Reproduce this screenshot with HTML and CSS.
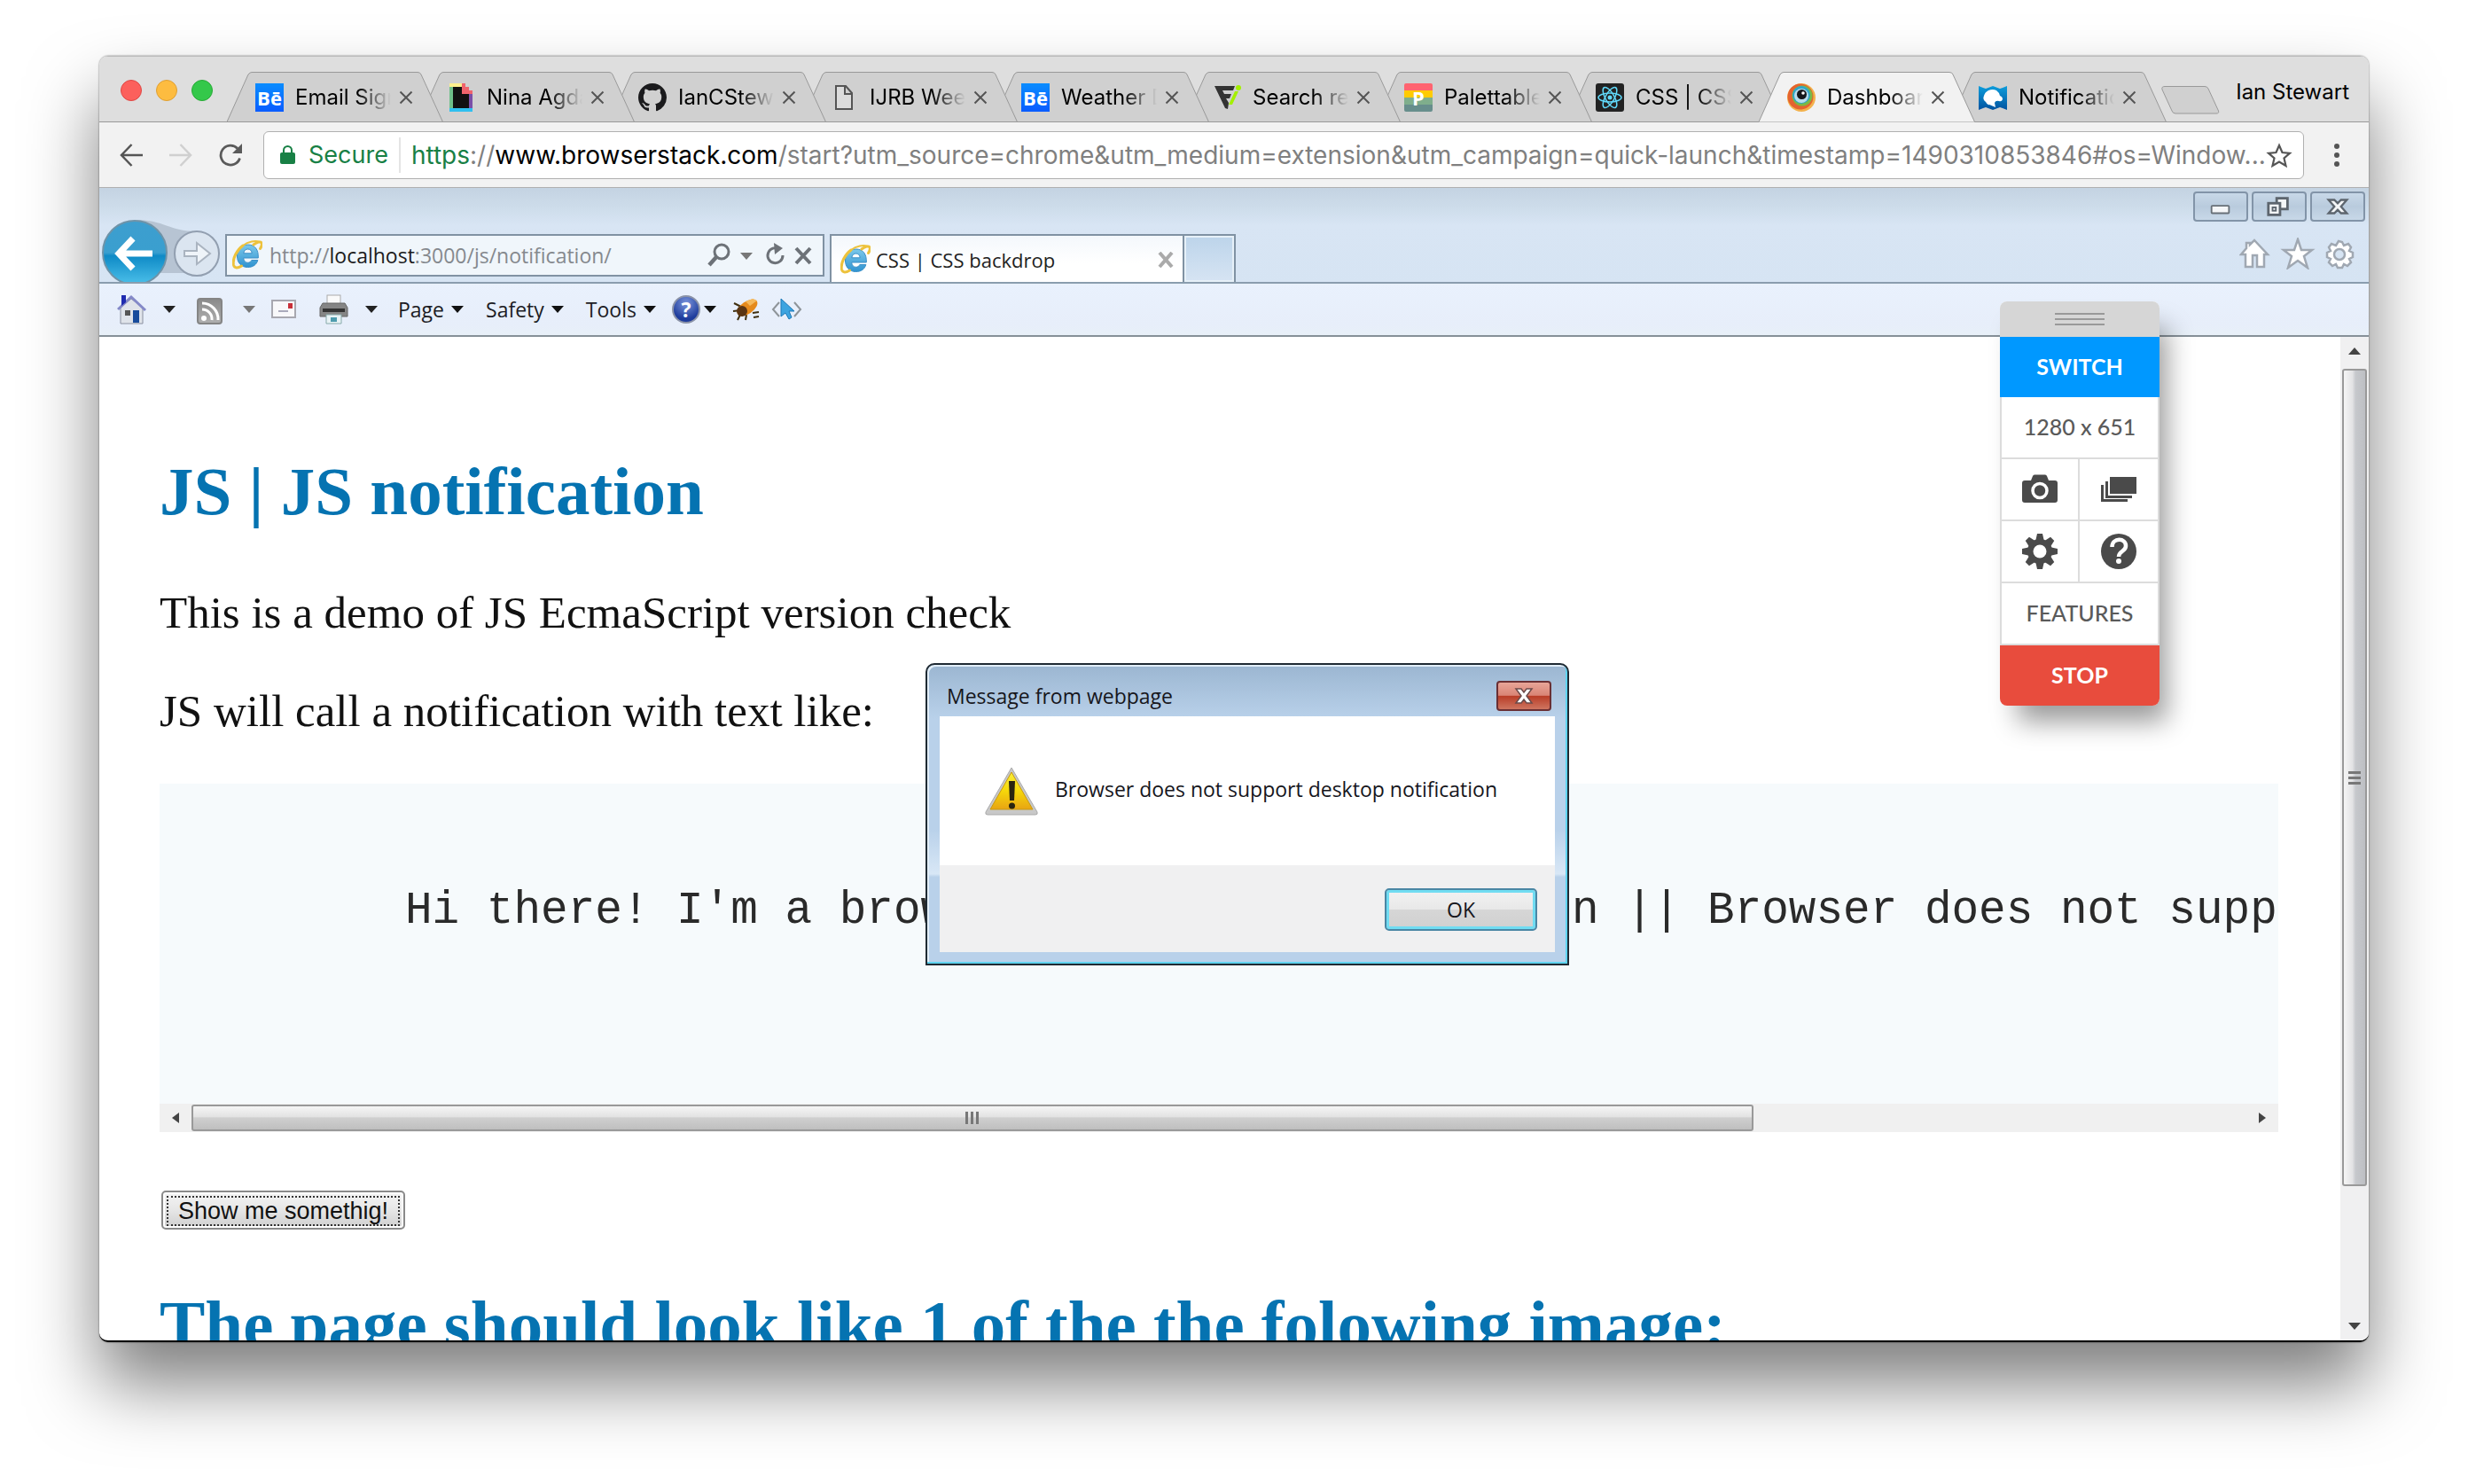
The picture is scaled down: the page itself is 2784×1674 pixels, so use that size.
FILE: index.html
```html
<!DOCTYPE html>
<html lang="en">
<head>
<meta charset="utf-8">
<title>Dashboard</title>
<link rel="stylesheet" href="styles.css">
</head>
<body>
<svg class="defs" aria-hidden="true">
  <defs>
    <linearGradient id="ieBlue" x1="0" y1="0" x2="0" y2="1"><stop offset="0" stop-color="#7cc8ea"/><stop offset="1" stop-color="#2f93d0"/></linearGradient>
    <linearGradient id="backBlue" x1="0" y1="0" x2="0" y2="1"><stop offset="0" stop-color="#3d9ecf"/><stop offset=".5" stop-color="#3a9fcf"/><stop offset=".55" stop-color="#0e8ac6"/><stop offset="1" stop-color="#4cc0ea"/></linearGradient>
    <linearGradient id="warn" x1="0" y1="0" x2="0" y2="1"><stop offset="0" stop-color="#f8ee3a"/><stop offset=".5" stop-color="#f6d80a"/><stop offset="1" stop-color="#e8a413"/></linearGradient>
    <linearGradient id="grey" x1="0" y1="0" x2="0" y2="1"><stop offset="0" stop-color="#8a8a8a"/><stop offset="1" stop-color="#b0b0b0"/></linearGradient>
    <symbol id="tab" viewBox="0 0 244 57"><path d="M0 56.500 L24 3 Q26 .5 28 .5 H215 Q218 .5 219 3 L243.500 56.500" stroke="#999"/></symbol>
    <symbol id="x" viewBox="0 0 16 16"><path d="M1.500 1.500 14.500 14.500M14.500 1.500 1.500 14.500" stroke="#555" stroke-width="2" fill="none"/></symbol>
    <symbol id="ie" viewBox="0 0 34 34">
      <path d="M17.500 5C9.500 5 5.500 11 5.500 18s4.500 12.500 12 12.500c6 0 10-3 11.300-8h-7c-.8 1.800-2.200 2.800-4.200 2.800-3 0-4.800-2.200-4.900-5.300h16.600C29.800 10.500 25.500 5 17.500 5zm0 5c2.700 0 4.500 1.800 4.700 4.800H12.800c.4-3 2.200-4.800 4.700-4.800z" fill="url(#ieBlue)" stroke="#3a8fc8"/>
      <path d="M24 5c4-3 8-4 9-2 .8 1.500 0 4-1.500 6.500M12 6C5 11 0 21 1.500 28c1 4 5 3.500 9 1" fill="none" stroke="#edc23c" stroke-width="3" stroke-linecap="round"/>
      <path d="M12 6C18 1.500 26 0 31 2" fill="none" stroke="#edc23c" stroke-width="2"/>
    </symbol>
    <symbol id="caret" viewBox="0 0 14 8"><path d="M0 0h14L7 8z"/></symbol>
  </defs>
</svg>

<div class="window">
  <header class="strip">
    <div class="lights">
      <button class="light red" aria-label="Close window"></button>
      <button class="light amber" aria-label="Minimise window"></button>
      <button class="light green" aria-label="Zoom window"></button>
    </div>
    <nav class="tabs" aria-label="Open tabs">
      <div class="tab t1"><svg class="tab-shape"><use href="#tab"/></svg><span class="fav behance">Bē</span><a class="tab-title" href="#">Email Signature</a><button class="tab-close" aria-label="Close tab"><svg><use href="#x"/></svg></button></div>
      <div class="tab t2"><svg class="tab-shape"><use href="#tab"/></svg><svg class="fav" viewBox="0 0 32 32"><path d="M3 4h12v24H3z" fill="#6fc08a"/><path d="M3 0h14v4H3z" fill="#fdf08e"/><path d="M25 12h4v16h-4z" fill="#7a4fa8"/><path d="M3 28h26v4H3z" fill="#2fc0f0"/><path d="M7 4h10v8h8v16H7z" fill="#111"/><path d="M17 0h4v4h4v4h4v4H17z" fill="#f0646c"/></svg><a class="tab-title" href="#">Nina Agdal GIFs</a><button class="tab-close" aria-label="Close tab"><svg><use href="#x"/></svg></button></div>
      <div class="tab t3"><svg class="tab-shape"><use href="#tab"/></svg><svg class="fav" viewBox="0 0 16 16"><path fill="#1b1b1d" d="M8 0C3.580 0 0 3.580 0 8c0 3.540 2.290 6.530 5.470 7.590.4.070.55-.17.55-.38 0-.19-.01-.82-.01-1.490-2.010.37-2.530-.49-2.690-.94-.09-.23-.48-.94-.82-1.130-.28-.15-.68-.52-.01-.53.63-.01 1.080.58 1.230.82.72 1.210 1.870.87 2.330.66.07-.52.28-.87.51-1.070-1.780-.2-3.640-.89-3.640-3.950 0-.87.31-1.590.82-2.150-.08-.2-.36-1.020.08-2.120 0 0 .67-.21 2.200.82.64-.18 1.320-.27 2-.27s1.360.09 2 .27c1.530-1.040 2.200-.82 2.200-.82.44 1.100.16 1.920.08 2.120.51.56.82 1.270.82 2.150 0 3.070-1.870 3.750-3.650 3.950.29.25.54.73.54 1.480 0 1.070-.01 1.930-.01 2.200 0 .21.15.46.55.38A8.010 8.010 0 0 0 16 8c0-4.420-3.580-8-8-8z"/></svg><a class="tab-title" href="#">IanCStewart</a><button class="tab-close" aria-label="Close tab"><svg><use href="#x"/></svg></button></div>
      <div class="tab t4"><svg class="tab-shape"><use href="#tab"/></svg><svg class="fav" viewBox="0 0 32 32"><path d="M7 3h11l7 8v18H7zM17 3v9h8" fill="#dcdcdc" stroke="#555" stroke-width="2"/></svg><a class="tab-title" href="#">IJRB Week 7</a><button class="tab-close" aria-label="Close tab"><svg><use href="#x"/></svg></button></div>
      <div class="tab t5"><svg class="tab-shape"><use href="#tab"/></svg><span class="fav behance">Bē</span><a class="tab-title" href="#">Weather Dash</a><button class="tab-close" aria-label="Close tab"><svg><use href="#x"/></svg></button></div>
      <div class="tab t6"><svg class="tab-shape"><use href="#tab"/></svg><svg class="fav" viewBox="0 0 32 32"><path d="M2 3h23l-2 5H11l2 4h8l-2 5h-4l3 5-1 7-3-1z" fill="#333"/><circle cx="29" cy="5" r="3" fill="#a4f000"/><path d="M25 9h4l-7 15h-4z" fill="#a4f000"/></svg><a class="tab-title" href="#">Search results</a><button class="tab-close" aria-label="Close tab"><svg><use href="#x"/></svg></button></div>
      <div class="tab t7"><svg class="tab-shape"><use href="#tab"/></svg><span class="fav palettable">P</span><a class="tab-title" href="#">Palettable</a><button class="tab-close" aria-label="Close tab"><svg><use href="#x"/></svg></button></div>
      <div class="tab t8"><svg class="tab-shape"><use href="#tab"/></svg><svg class="fav" viewBox="0 0 32 32"><rect width="32" height="32" rx="3" fill="#222"/><g fill="none" stroke="#61dafb" stroke-width="1.500"><ellipse cx="16" cy="16" rx="13" ry="5"/><ellipse cx="16" cy="16" rx="13" ry="5" transform="rotate(60 16 16)"/><ellipse cx="16" cy="16" rx="13" ry="5" transform="rotate(120 16 16)"/></g><circle cx="16" cy="16" r="2.500" fill="#61dafb"/></svg><a class="tab-title" href="#">CSS | CSS backdrop</a><button class="tab-close" aria-label="Close tab"><svg><use href="#x"/></svg></button></div>
      <div class="tab active"><svg class="tab-shape"><use href="#tab"/></svg><svg class="fav" viewBox="0 0 32 32"><circle cx="16" cy="16" r="16" fill="#f3b24c"/><circle cx="15" cy="15" r="14.500" fill="#e5632f"/><circle cx="17" cy="14" r="11.500" fill="#7cb944"/><circle cx="16" cy="13" r="10" fill="#2fa5c8"/><circle cx="16" cy="14" r="8" fill="#b8dcec"/><circle cx="16.500" cy="12.500" r="5.500" fill="#16181c"/><circle cx="18" cy="11" r="1.800" fill="#fff"/></svg><a class="tab-title" href="#">Dashboard</a><button class="tab-close" aria-label="Close tab"><svg><use href="#x"/></svg></button></div>
      <div class="tab"><svg class="tab-shape"><use href="#tab"/></svg><svg class="fav" viewBox="0 0 32 32"><defs><linearGradient id="mdn" x1="0" y1="0" x2="0" y2="1"><stop offset="0" stop-color="#0d9ddb"/><stop offset="1" stop-color="#0053a0"/></linearGradient></defs><path d="M0 3l5 2 3 1 8-3 8 3 3-1 5-2v27l-5-2-3-1-8 3-8-3-3 1-5 2z" fill="url(#mdn)"/><path d="M11 8q5-2 9 0 3 2 4 6 3 1 3 4-1 3-4 2-4-1-5 2l1 5-7-3q-2 1-4-3-4-3-2-7 1-4 5-6z" fill="#fff"/></svg><a class="tab-title" href="#">Notification API</a><button class="tab-close" aria-label="Close tab"><svg><use href="#x"/></svg></button></div>
    </nav>
    <button class="new-tab" aria-label="New tab"><svg viewBox="0 0 66 32"><path d="M4 .5H49Q52 .5 53 3L64.500 28Q65.500 31 62 31H16Q13 31 12 28L1 4Q0 .5 4 .5z" fill="#d0d0d0" stroke="#999"/></svg></button>
    <span class="profile">Ian Stewart</span>
  </header>

  <div class="toolbar">
    <button class="nav-btn" aria-label="Back"><svg viewBox="0 0 26 26"><path d="M26 13H2M13.500 1 2 13l11.500 12" fill="none" stroke="#555" stroke-width="2.500"/></svg></button>
    <button class="nav-btn" aria-label="Forward"><svg viewBox="0 0 26 26"><path d="M0 13h24M12.500 1 24 13 12.500 25" fill="none" stroke="#d0d0d0" stroke-width="2.500"/></svg></button>
    <button class="nav-btn" aria-label="Reload"><svg viewBox="0 0 26 26"><path d="M23.500 16.500A11 11 0 1 1 21 5.500" fill="none" stroke="#5a5a5a" stroke-width="2.800"/><path d="M26 0v11H15z" fill="#5a5a5a"/></svg></button>
    <div class="omnibox">
      <svg class="lock" viewBox="0 0 17 22"><path d="M4 9V5.500a4.500 4.500 0 0 1 9 0V9" fill="none" stroke="#188045" stroke-width="2"/><rect y="8" width="17" height="13" rx="2" fill="#188045"/></svg>
      <span class="secure">Secure</span>
      <div class="url" role="textbox" aria-label="Address" contenteditable="true" spellcheck="false"><span class="ok">https</span>://<b>www.browserstack.com</b>/start?utm_source=chrome&amp;utm_medium=extension&amp;utm_campaign=quick-launch&amp;timestamp=1490310853846#os=Window...</div>
      <button class="star" aria-label="Bookmark"><svg viewBox="0 0 30 28"><path d="M15 3l3.500 8 8.500.8-6.500 5.700 2 8.500L15 21.500 7.500 26l2-8.500L3 11.800l8.500-.8z" fill="none" stroke="#555" stroke-width="2.200"/></svg></button>
    </div>
    <button class="menu" aria-label="Menu"><svg viewBox="0 0 6 26"><g fill="#555"><circle cx="3" cy="3" r="3"/><circle cx="3" cy="13" r="3"/><circle cx="3" cy="23" r="3"/></g></svg></button>
  </div>

  <div class="remote">
    <div class="ie-top">
      <svg class="ie-nav" viewBox="0 0 138 70">
        <path d="M40 0C75 1 75 13 110 13L120 60H60z" fill="#a9b6c4" opacity=".7"/>
        <circle cx="38" cy="37" r="36" fill="url(#backBlue)" stroke="#6f93a8" stroke-width="2"/>
        <path d="M58 38H24M36 21 20 38l16 17" fill="none" stroke="#fff" stroke-width="7"/>
        <circle cx="108" cy="38" r="25" fill="#dbe5f0" stroke="#929fb0" stroke-width="2"/>
        <path d="M94 35h14v-9l15 12-15 12v-9H94z" fill="#eff4f9" stroke="#aab4c0" stroke-width="2"/>
      </svg>
      <div class="ie-address">
        <svg class="ie-icon"><use href="#ie"/></svg>
        <div class="ie-url" role="textbox" aria-label="Page address" contenteditable="true" spellcheck="false">http://<b>localhost</b>:3000/js/notification/</div>
        <svg class="ie-tools" viewBox="0 0 120 28"><g fill="none" stroke="#6d7278" stroke-width="3"><circle cx="16" cy="10" r="8"/><path d="M10 16 2 25" stroke-width="4.500"/><path d="M81 7a8.500 8.500 0 1 0 4 7"/><path d="M100 6l16 17M116 6l-16 17" stroke-width="4"/></g><path d="M75 0l10 6-9 7z" fill="#6d7278"/><path d="M37 11h14l-7 8z" fill="#777"/></svg>
      </div>
      <div class="ie-tab">
        <svg class="ie-icon"><use href="#ie"/></svg>
        <span class="ie-tab-title">CSS | CSS backdrop</span>
        <svg class="ie-tab-close" viewBox="0 0 18 18"><path d="M2 1l14 16M16 1 2 17" stroke="#aaa" stroke-width="4"/></svg>
      </div>
      <button class="ie-new" aria-label="New Tab"></button>
      <div class="ie-right">
        <div class="win-btns">
          <button aria-label="Minimise"><svg viewBox="0 0 60 32"><rect x="19" y="15" width="21" height="9" rx="1" fill="#f4f6f8" stroke="#687078" stroke-width="2"/></svg></button>
          <button aria-label="Restore"><svg viewBox="0 0 60 32"><g fill="#f4f6f8" stroke="#5d656e" stroke-width="3"><rect x="27" y="6" width="13" height="13"/><rect x="17" y="12" width="14" height="14"/><rect x="22" y="17" width="4" height="4" stroke-width="2"/></g></svg></button>
          <button aria-label="Close"><svg viewBox="0 0 60 32"><path d="M19 8h7l4 4 4-4h7l-7 8 7 8h-7l-4-4-4 4h-7l7-8z" fill="#f4f6f8" stroke="#5d656e" stroke-width="2.500"/></svg></button>
        </div>
        <svg class="ie-links" viewBox="0 0 132 36"><g fill="#fff" stroke="#a0a8b2" stroke-width="2.500"><path d="M2 19 8 12V6h4v2l5-5 15 16h-4v14h-8V20h-5v13H7V19z"/><path d="M66 2l4 12h12l-9 7 4 13-11-8-11 8 4-13-9-7h12z"/><path d="M112 4l4 1 2 4 5-2 3 4-2 4 4 2v5l-4 2 2 4-4 4-4-2-2 4h-5l-2-4-4 2-4-4 2-4-4-2v-5l4-2-2-4 3-4 5 2z"/><circle cx="113" cy="19" r="6" fill="#d6e4f3"/></g></svg>
      </div>
    </div>

    <div class="ie-bar">
      <svg class="cmd-icons" viewBox="0 0 296 34">
        <path d="M4 15v18h25V15L16 5z" fill="#dfe3ea" stroke="#8a90a0"/><path d="M1 17 16 3l16 15" fill="none" stroke="#8489c8" stroke-width="3"/><path d="M5 1h5v8l-5 4z" fill="#1f2bb0"/><rect x="18" y="18" width="7" height="14" fill="#174b9c"/><rect x="9" y="18" width="6" height="6" fill="#555"/>
        <path d="M52 13h14l-7 8z" fill="#222"/>
        <rect x="91" y="5" width="27" height="28" rx="3" fill="url(#grey)" stroke="#858585" stroke-width="2"/><g fill="none" stroke="#fff" stroke-width="3"><path d="M96 17a11 11 0 0 1 11 12M96 10a18 18 0 0 1 18 19"/></g><circle cx="98" cy="27" r="3" fill="#fff"/>
        <path d="M142 13h14l-7 8z" fill="#777"/>
        <rect x="175" y="7" width="26" height="19" fill="#f8f8fa" stroke="#a8a8b0" stroke-width="2"/><path d="M182 19h11" stroke="#aab" stroke-width="2"/><path d="M193 10h5v6h-5z" fill="#c8303a"/>
        <rect x="237" y="1" width="15" height="12" fill="#fafafa" stroke="#aaa"/><path d="M229 15l3-5h25l3 5v10h-31z" fill="#858585" stroke="#666"/><path d="M232 16h25v4h-25z" fill="#333"/><path d="M236 23h17v10h-17z" fill="#e8f3f6" stroke="#8aa"/><path d="M241 26h7v5h-7z" fill="#4e9cae"/>
        <path d="M280 13h14l-7 8z" fill="#222"/>
      </svg>
      <button class="cmd">Page<svg><use href="#caret"/></svg></button>
      <button class="cmd">Safety<svg><use href="#caret"/></svg></button>
      <button class="cmd">Tools<svg><use href="#caret"/></svg></button>
      <span class="help">?</span>
      <svg class="cmd-end" viewBox="0 0 112 34">
        <path d="M0 13h14l-7 8z" fill="#111"/>
        <path d="M34 10l8 4M33 19l9-1M38 29l4-8M47 29l1-6M56 26l6-1M55 21l7-1" stroke="#403010" stroke-width="2"/><ellipse cx="49" cy="15" rx="13" ry="7" transform="rotate(-35 49 15)" fill="#e58a1c"/><ellipse cx="43" cy="19" rx="6" ry="6" fill="#5a3512"/><path d="M47 8l8-3 5 2-8 6z" fill="#f5b95c"/>
        <path d="M85 9l-7 8 7 8M102 9l7 8-7 8" fill="none" stroke="#8e9499" stroke-width="2"/><path d="M87 5v20l5-4 4 7 3-2-3-7h6z" fill="#3da4e0" stroke="#1c78b8"/>
      </svg>
    </div>

    <div class="view">
      <main class="page">
        <h1>JS | JS notification</h1>
        <p>This is a demo of JS EcmaScript version check</p>
        <p>JS will call a notification with text like:</p>
        <div class="sample">
          <pre><code>Hi there! I'm a browser desktop notification || Browser does not support desktop notification</code></pre>
          <div class="hscroll">
            <svg class="arrow" viewBox="0 0 8 12"><path d="M8 0v12L0 6z" fill="#444"/></svg>
            <div class="htrack"><div class="hthumb"><i></i><i></i><i></i></div></div>
            <svg class="arrow" viewBox="0 0 8 12"><path d="M0 0v12l8-6z" fill="#444"/></svg>
          </div>
        </div>
        <button class="show"><span>Show me somethig!</span></button>
        <h1>The page should look like 1 of the the folowing image:</h1>
      </main>
      <div class="vscroll">
        <svg class="varrow" viewBox="0 0 14 8"><path d="M0 8h14L7 0z" fill="#444"/></svg>
        <div class="vtrack"><div class="vthumb"><i></i><i></i><i></i></div></div>
        <svg class="varrow" viewBox="0 0 14 8"><path d="M0 0h14L7 8z" fill="#444"/></svg>
      </div>

      <section class="dialog" role="alertdialog" aria-labelledby="dlg-title" aria-describedby="dlg-text">
        <div class="dlg-head">
          <span id="dlg-title">Message from webpage</span>
          <button class="dlg-close" aria-label="Close"><svg viewBox="0 0 22 18"><path d="M2 1h6l3 4 3-4h6l-6 8 6 8h-6l-3-4-3 4H2l6-8z" fill="#fff" stroke="#6b4a4a" stroke-width="1.500"/></svg></button>
        </div>
        <div class="dlg-body">
          <svg class="warn" viewBox="0 0 62 56"><path d="M31 2 60 52Q61 55 58 55H4Q1 55 2 52z" fill="#c8c8c8" stroke="#aaa"/><path d="M31 7 55 49H7z" fill="url(#warn)" stroke="#c99a10"/><path d="M28 17h7l-1 22h-5z" fill="#2a2410"/><circle cx="31.500" cy="45" r="3.500" fill="#2a2410"/></svg>
          <span id="dlg-text">Browser does not support desktop notification</span>
        </div>
        <div class="dlg-foot"><button class="ok-btn">OK</button></div>
      </section>
    </div>

    <aside class="dock" aria-label="Session controls">
      <div class="grip"><i></i><i></i><i></i></div>
      <button class="switch">SWITCH</button>
      <div class="cell wide">1280 x 651</div>
      <div class="pair">
        <button class="cell" aria-label="Screenshot"><svg viewBox="0 0 40 34"><path d="M3 7h7l2-5q.5-1.500 2-1.500h12q1.500 0 2 1.500l2 5h7q3 0 3 3v19q0 3-3 3H3q-3 0-3-3V10q0-3 3-3z" fill="#4a4a4a"/><circle cx="20" cy="18.500" r="8" fill="none" stroke="#fff" stroke-width="3.500"/></svg></button>
        <button class="cell" aria-label="Gallery"><svg viewBox="0 0 40 34"><path d="M10 3h30v19H10zM5 8h3v16h27v3H5zM0 12h3v16h27v3H0z" fill="#4a4a4a"/></svg></button>
      </div>
      <div class="pair">
        <button class="cell" aria-label="Settings"><svg viewBox="0 0 40 40"><g fill="#4a4a4a"><circle cx="20" cy="20" r="14"/><g id="teeth"><path d="M17 0h6l2 9H15zM17 40h6l2-9H15z"/><path d="M0 17v6l9 2V15zM40 17v6l-9 2V15z"/></g><use href="#teeth" transform="rotate(45 20 20)"/></g><circle cx="20" cy="20" r="7.500" fill="#fff"/></svg></button>
        <button class="cell" aria-label="Help"><svg viewBox="0 0 40 40"><circle cx="20" cy="20" r="20" fill="#4a4a4a"/><path d="M12.500 15c0-11 16-10.500 15.500-1 0 6-8 5.500-8 12" fill="none" stroke="#fff" stroke-width="4.500"/><circle cx="20" cy="31" r="3" fill="#fff"/></svg></button>
      </div>
      <button class="cell wide">FEATURES</button>
      <button class="stop">STOP</button>
    </aside>
  </div>
</div>
</body>
</html>
```
FILE: styles.css
```css
* { box-sizing: border-box; }

body {
  margin: 0;
  height: 100vh;
  padding: 63px 112px 160px;
  display: flex;
  background: #fff;
  font-family: Inter, "Liberation Sans", sans-serif;
}

button {
  margin: 0;
  padding: 0;
  border: 0;
  background: none;
  font: inherit;
  color: inherit;
  cursor: pointer;
}

svg { display: block; }
.defs { position: absolute; width: 0; height: 0; }

.window {
  flex: 1;
  min-width: 0;
  display: flex;
  flex-direction: column;
  overflow: hidden;
  border-radius: 10px;
  background: #fff;
  border-bottom: 2px solid #000;
  box-shadow: 0 0 2px rgba(0, 0, 0, .6), 0 48px 80px rgba(0, 0, 0, .5);
}

/* tab strip */
.strip {
  display: flex;
  align-items: flex-end;
  height: 75px;
  background: #dedede;
  border-top: 1px solid #bbb;
  border-bottom: 1px solid #999;
}
.lights { display: flex; gap: 16px; align-self: center; padding: 0 16px 0 24px; }
.light { width: 24px; height: 24px; border-radius: 50%; margin-top: 3px; }
.red { background: #fc605c; border: 1px solid #df4744; }
.amber { background: #fdbc40; border: 1px solid #de9f34; }
.green { background: #34c84a; border: 1px solid #27aa35; }

.tabs { display: flex; margin-bottom: -1px; }
.tab {
  position: relative;
  display: flex;
  align-items: center;
  width: 244px;
  height: 57px;
  margin-right: -28px;
  padding-left: 32px;
}
.t1 { z-index: 8; } .t2 { z-index: 7; } .t3 { z-index: 6; } .t4 { z-index: 5; }
.t5 { z-index: 4; } .t6 { z-index: 3; } .t7 { z-index: 2; } .t8 { z-index: 1; }
.tab-shape { position: absolute; inset: 0; width: 244px; height: 57px; fill: #d0d0d0; }
.tab:not(.active)::after { content: ""; position: absolute; left: 0; right: 0; bottom: 0; height: 1px; background: #999; }
.active { z-index: 9; }
.active .tab-shape { fill: #f2f2f2; }
.fav { position: relative; width: 32px; height: 32px; flex: none; }
.behance {
  background: linear-gradient(#0a8cff, #0a5cff);
  color: #fff;
  font: bold 22px/32px "Open Sans", sans-serif;
  text-align: center;
}
.palettable {
  background: linear-gradient(#ff6470 25%, #ffcb00 25% 50%, #7fae8c 50% 75%, #678e8c 75%);
  color: #fff;
  font: bold 22px/32px "Open Sans", sans-serif;
  text-align: center;
  border-radius: 2px;
}
.tab-title {
  position: relative;
  width: 108px;
  margin-left: 13px;
  overflow: hidden;
  white-space: nowrap;
  color: #000;
  text-decoration: none;
  font-size: 24px;
  line-height: 32px;
  -webkit-mask-image: linear-gradient(90deg, #000 65%, transparent);
  mask-image: linear-gradient(90deg, #000 65%, transparent);
}
.tab-close { position: relative; margin-left: 9px; }
.tab-close svg { width: 16px; height: 16px; }
.new-tab { margin: 0 auto 8px 22px; }
.new-tab svg { width: 66px; height: 32px; }
.profile { align-self: center; padding: 6px 22px 0 0; font-size: 24px; line-height: 32px; white-space: nowrap; }

/* address bar */
.toolbar {
  display: flex;
  align-items: center;
  height: 74px;
  padding-left: 23px;
  background: #f2f2f2;
  border-bottom: 1px solid #b0b0b0;
}
.nav-btn { margin-right: 30px; }
.nav-btn svg { width: 26px; height: 26px; }
.omnibox {
  flex: 1;
  min-width: 0;
  display: flex;
  align-items: center;
  height: 54px;
  margin-left: -6px;
  padding: 0 12px 0 18px;
  background: #fff;
  border: 1px solid #b0b0b0;
  border-radius: 6px;
  font-size: 28px;
  line-height: 40px;
}
.lock { width: 17px; height: 22px; flex: none; }
.secure { margin-left: 15px; padding-right: 12px; font-size: 27px; color: #188045; border-right: 2px solid #e4e4e4; }
.url { flex: 1; min-width: 0; margin-left: 12px; overflow: hidden; white-space: nowrap; color: #808080; outline: 0; }
.url b { color: #000; font-weight: 400; }
.url .ok { color: #188045; }
.star svg { width: 30px; height: 28px; }
.menu { width: 73px; }
.menu svg { width: 6px; height: 26px; margin: 0 auto; }

/* remote desktop */
.remote {
  position: relative;
  flex: 1;
  min-height: 0;
  display: flex;
  flex-direction: column;
  font-family: "Open Sans", "Noto Sans", sans-serif;
  font-size: 23px;
  line-height: 32px;
}
.ie-top {
  display: flex;
  align-items: flex-end;
  height: 108px;
  background: linear-gradient(#c4d3e2, #cddcea 20%, #d8e5f4 40%, #d6e4f3);
  border-bottom: 2px solid #8a9dae;
}
.ie-nav { width: 138px; height: 70px; margin-left: 2px; flex: none; }
.ie-icon { width: 34px; height: 34px; flex: none; }
.ie-address {
  display: flex;
  align-items: center;
  width: 676px;
  height: 48px;
  margin: 0 6px 6px 2px;
  padding: 0 10px 0 6px;
  background: #f0f6fb;
  border: 2px solid #8092a3;
}
.ie-url { flex: 1; margin-left: 8px; color: #85898e; white-space: nowrap; outline: 0; }
.ie-url b { font-weight: 400; color: #1c1c1c; }
.ie-tools { width: 120px; height: 28px; }
.ie-tab {
  display: flex;
  align-items: center;
  width: 400px;
  height: 54px;
  padding: 2px 10px 0 10px;
  background: linear-gradient(#f4f8fc, #fff 60%);
  border: 2px solid #8092a3;
  border-bottom: 0;
}
.ie-tab-title { flex: 1; margin-left: 6px; color: #222; font-size: 22px; white-space: nowrap; }
.ie-tab-close { width: 18px; height: 18px; }
.ie-new {
  width: 58px;
  height: 54px;
  background: linear-gradient(#bcd4ea, #d6e4f3);
  border: 2px solid #8092a3;
  border-width: 2px 2px 0 0;
  box-shadow: inset 0 0 0 2px #e6f0f8;
}
.ie-right { margin-left: auto; display: flex; flex-direction: column; align-items: flex-end; gap: 18px; padding: 0 4px 14px 0; }
.win-btns { display: flex; gap: 4px; }
.win-btns button { width: 62px; height: 34px; border: 2px solid #8294a8; border-radius: 4px; background: linear-gradient(#c8d8e8, #b9cbdd 50%, #c8d8e8); }
.win-btns svg { width: 58px; height: 30px; }
.ie-links { width: 132px; height: 36px; margin-right: 10px; }

.ie-bar {
  display: flex;
  align-items: center;
  height: 60px;
  padding-left: 20px;
  background: linear-gradient(#e9f1fd, #e7eefa 80%, #e8f0f8);
  border-bottom: 2px solid #869098;
  color: #1c1c24;
}
.cmd-icons { width: 296px; height: 34px; margin-right: 21px; flex: none; }
.cmd { display: flex; align-items: center; gap: 8px; margin-right: 25px; }
.cmd svg { width: 14px; height: 8px; fill: #111; }
.help {
  width: 32px;
  height: 32px;
  margin-right: 4px;
  margin-left: -7px;
  border: 2px solid #8b93a8;
  border-radius: 50%;
  background: radial-gradient(circle at 50% 25%, #7c96dc, #1e3c9c 70%);
  color: #fff;
  font-weight: 700;
  line-height: 28px;
  text-align: center;
}
.cmd-end { width: 112px; height: 34px; }

.view { position: relative; flex: 1; min-height: 0; display: flex; }
.page {
  flex: 1;
  min-width: 0;
  overflow: hidden;
  padding: 130px 70px 0 68px;
  font: 51px/58px "Liberation Serif", serif;
  color: #111;
}
.page h1 { margin: 0 0 64px; font-size: 77px; line-height: 88px; color: #0573b1; white-space: nowrap; }
.page p { margin: 0 0 53px; }
.sample { margin-bottom: 66px; background: #f6fafc; }
.sample pre { margin: 0; height: 361px; padding: 115px 0 0 277px; overflow: hidden; font: 51px/58px "Liberation Mono", monospace; color: #2a2a2a; }
.sample code { font: inherit; }
.hscroll { display: flex; align-items: center; height: 32px; background: #f0f0f0; }
.arrow { width: 8px; height: 12px; margin: 0 14px; }
.htrack { flex: 1; }
.hthumb {
  display: flex;
  justify-content: center;
  align-items: center;
  gap: 3px;
  width: 76%;
  height: 30px;
  border: 2px solid #999;
  border-radius: 3px;
  background: linear-gradient(#f5f5f5, #e3e3e3 45%, #cfcfcf 50%, #bfbfbf);
}
.hthumb i { width: 3px; height: 14px; background: #777; }
.show {
  display: block;
  height: 44px;
  margin: 0 0 63px 2px;
  padding: 4px;
  border: 2px solid #8a8a8a;
  border-radius: 5px;
  background: linear-gradient(#f4f4f4, #e6e6e6 50%, #cfcfcf);
  box-shadow: inset 0 0 0 2px #fff;
  font: 27px/30px "Liberation Sans", sans-serif;
}
.show span { display: block; padding: 0 11px; border: 2px dotted #333; }

.vscroll { width: 32px; display: flex; flex-direction: column; align-items: center; padding: 12px 2px; background: #f0f0f1; }
.varrow { width: 14px; height: 8px; }
.vtrack { flex: 1; width: 28px; padding: 16px 0; }
.vthumb {
  display: flex;
  flex-direction: column;
  justify-content: center;
  align-items: center;
  gap: 3px;
  height: 87%;
  border: 2px solid #999;
  border-radius: 3px;
  background: linear-gradient(90deg, #f5f5f5, #e3e3e5 40%, #c6c8cc 55%, #bdbfc3);
}
.vthumb i { width: 14px; height: 3px; background: #777; }

/* alert box */
.dialog {
  position: absolute;
  left: 932px;
  top: 368px;
  width: 726px;
  padding: 0 14px 13px;
  border: 2px solid #1f2a33;
  border-radius: 10px 10px 0 0;
  background: linear-gradient(#9bb6d1, #b9d1ea 18%, #b9d1ea 55%, #d8e7f6 70%, #b9d1ea 71%);
  box-shadow: inset -2px -2px 0 #60d4f0, inset 2px 2px 0 #e2eef8;
  color: #16161c;
}
.dlg-head { display: flex; justify-content: space-between; align-items: center; height: 58px; padding: 12px 4px 0 8px; }
.dlg-close {
  width: 62px;
  height: 34px;
  display: grid;
  place-items: center;
  border: 2px solid #6a2f33;
  border-radius: 4px;
  background: linear-gradient(#e8a598, #d98475 48%, #b83c26 50%, #cf7560);
}
.dlg-close svg { width: 22px; height: 18px; }
.dlg-body { display: flex; align-items: center; gap: 18px; height: 168px; padding: 4px 50px 0; background: #fff; white-space: nowrap; }
.warn { width: 62px; height: 56px; margin-bottom: 4px; flex: none; }
.dlg-body span { margin-bottom: 8px; }
.dlg-foot { display: flex; justify-content: flex-end; padding: 26px 20px 24px; background: #f0f0f1; }
.ok-btn {
  width: 172px;
  height: 48px;
  border: 2px solid #4a86a4;
  border-radius: 5px;
  background: linear-gradient(#f2f2f2, #e8e8e8 50%, #d6d6d6 51%, #d0d0d0);
  box-shadow: inset 0 0 0 3px #70dcf2;
}

/* floating dock */
.dock {
  position: absolute;
  top: 128px;
  right: 236px;
  width: 180px;
  overflow: hidden;
  border-radius: 8px;
  background: #fff;
  box-shadow: 14px 24px 30px -6px rgba(0, 0, 0, .4);
  font: 500 25px/32px Lato, sans-serif;
  color: #5a5a5a;
}
.grip { display: flex; flex-direction: column; align-items: center; gap: 4px; height: 40px; padding-top: 13px; background: #d6d6d6; }
.grip i { width: 56px; height: 2px; background: #999; }
.switch, .stop { display: block; width: 100%; height: 68px; padding-bottom: 3px; color: #fff; font-weight: 700; }
.switch { background: #0098ff; }
.stop { background: #e84c3d; }
.cell { display: grid; place-items: center; height: 70px; border: 2px solid #dcdcdc; border-top: 0; }
.wide { width: 100%; padding-bottom: 3px; }
.pair { display: grid; grid-template-columns: 90px 90px; }
.pair .cell + .cell { border-left: 0; }
.pair svg { width: 40px; }
```
